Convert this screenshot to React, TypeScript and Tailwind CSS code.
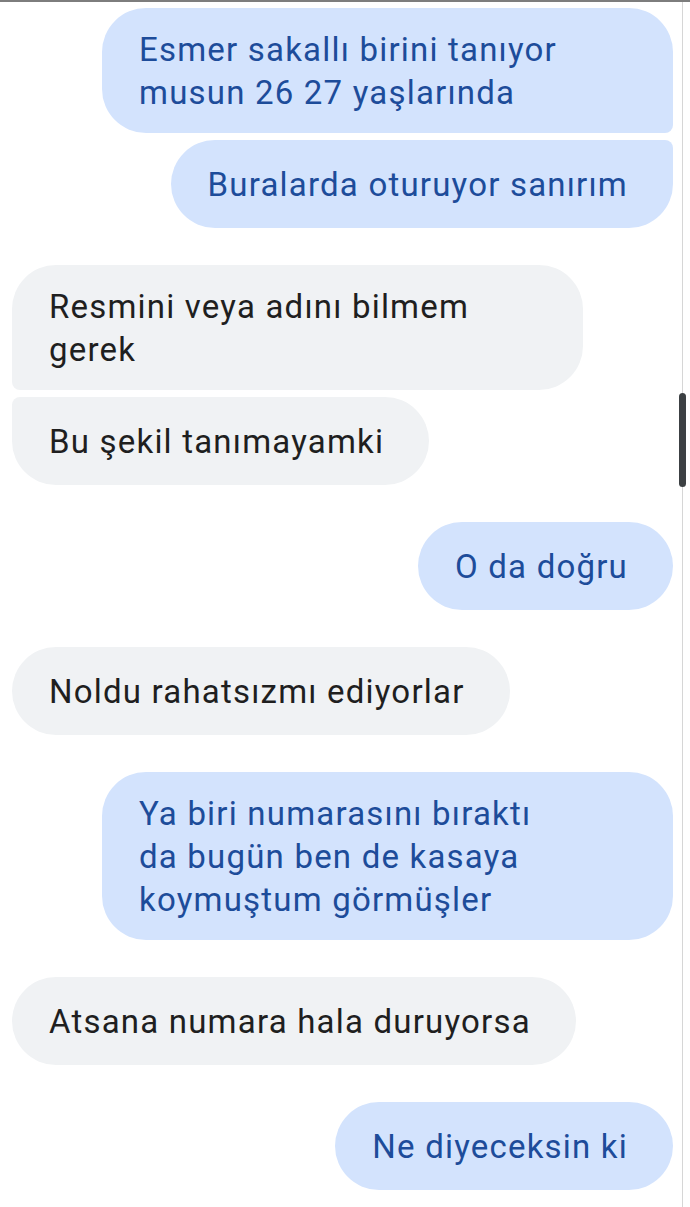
import React from "react";

type Msg = { lines: string[]; wide?: boolean };
type Group = { out: boolean; msgs: Msg[] };

const groups: Group[] = [
  {
    out: true,
    msgs: [
      { lines: ["Esmer sakallı birini tanıyor", "musun 26 27 yaşlarında"], wide: true },
      { lines: ["Buralarda oturuyor sanırım"] },
    ],
  },
  {
    out: false,
    msgs: [
      { lines: ["Resmini veya adını bilmem", "gerek"], wide: true },
      { lines: ["Bu şekil tanımayamki"] },
    ],
  },
  { out: true, msgs: [{ lines: ["O da doğru"] }] },
  { out: false, msgs: [{ lines: ["Noldu rahatsızmı ediyorlar"] }] },
  {
    out: true,
    msgs: [
      {
        lines: ["Ya biri numarasını bıraktı", "da bugün ben de kasaya", "koymuştum görmüşler"],
        wide: true,
      },
    ],
  },
  { out: false, msgs: [{ lines: ["Atsana numara hala duruyorsa"] }] },
  { out: true, msgs: [{ lines: ["Ne diyeceksin ki"] }] },
];

function radius(out: boolean, i: number, n: number) {
  const first = i === 0;
  const last = i === n - 1;
  if (out) {
    return `rounded-l-[44px] ${first ? "rounded-tr-[44px]" : "rounded-tr-[8px]"} ${
      last ? "rounded-br-[44px]" : "rounded-br-[8px]"
    }`;
  }
  return `rounded-r-[44px] ${first ? "rounded-tl-[44px]" : "rounded-tl-[8px]"} ${
    last ? "rounded-bl-[44px]" : "rounded-bl-[8px]"
  }`;
}

function Bubble({ msg, out, cls }: { msg: Msg; out: boolean; cls: string }) {
  return (
    <div
      className={`flex min-h-[88px] flex-col justify-center py-[19.5px] pl-[37px] pr-[45px] text-[33px] leading-[43px] tracking-[1.2px] ${
        msg.wide ? "w-[571px]" : ""
      } ${out ? "bg-[#d3e3fd] text-[#1d4c9a]" : "bg-[#f0f2f4] text-[#1f1f1f]"} ${cls}`}
    >
      {msg.lines.map((l) => (
        <span key={l} className="whitespace-nowrap">
          {l}
        </span>
      ))}
    </div>
  );
}

export default function App() {
  return (
    <div
      className="relative h-[1207px] w-[690px] overflow-hidden border-t-2 border-[#7d7d7d] bg-white"
      style={{ fontFamily: "Roboto, 'Noto Sans', sans-serif" }}
    >
      <div className="flex flex-col gap-[37px] pl-[12px] pr-[17px] pt-[6px]">
        {groups.map((g, gi) => (
          <div key={gi} className={`flex flex-col gap-[7px] ${g.out ? "items-end" : "items-start"}`}>
            {g.msgs.map((m, i) => (
              <Bubble key={i} msg={m} out={g.out} cls={radius(g.out, i, g.msgs.length)} />
            ))}
          </div>
        ))}
      </div>

      {/* scroll track + thumb */}
      <div className="absolute right-[7px] top-0 h-full w-[1px] bg-[#d6d6d6]" />
      <div className="absolute right-[4px] top-[391px] h-[94px] w-[7px] rounded-full bg-[#3c4043]" />
    </div>
  );
}
